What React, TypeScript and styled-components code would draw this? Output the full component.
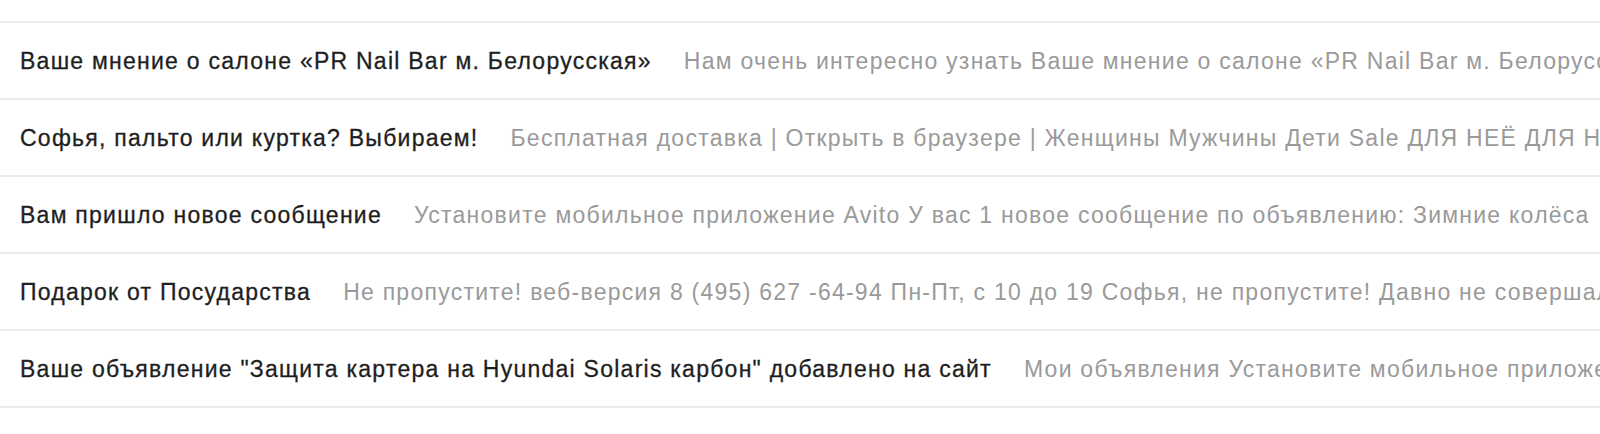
import React from 'react';
import styled, { createGlobalStyle } from 'styled-components';

const GlobalStyle = createGlobalStyle`
  html, body {
    margin: 0;
    padding: 0;
    background: #ffffff;
  }
  body {
    font-family: 'Liberation Sans', Arial, sans-serif;
    overflow: hidden;
  }
`;

interface Letter {
  subject: string;
  snippet: string;
}

const letters: Letter[] = [
  {
    subject: 'Ваше мнение о салоне «PR Nail Bar м. Белорусская»',
    snippet:
      'Нам очень интересно узнать Ваше мнение о салоне «PR Nail Bar м. Белорусская». Пожалуйста, оцените качество обслуживания',
  },
  {
    subject: 'Софья, пальто или куртка? Выбираем!',
    snippet:
      'Бесплатная доставка | Открыть в браузере | Женщины Мужчины Дети Sale ДЛЯ НЕЁ ДЛЯ НЕГО Новинки сезона',
  },
  {
    subject: 'Вам пришло новое сообщение',
    snippet:
      'Установите мобильное приложение Avito У вас 1 новое сообщение по объявлению: Зимние колёса',
  },
  {
    subject: 'Подарок от Посударства',
    snippet:
      'Не пропустите! веб-версия 8 (495) 627 -64-94 Пн-Пт, с 10 до 19 Софья, не пропустите! Давно не совершали покупок',
  },
  {
    subject: 'Ваше объявление "Защита картера на Hyundai Solaris карбон" добавлено на сайт',
    snippet:
      'Мои объявления Установите мобильное приложение Avito Ваше объявление добавлено на сайт',
  },
];

const App: React.FC = () => {
  return (
    <>
      <GlobalStyle />
      <Page>
        <List>
          {letters.map((letter) => (
            <Row key={letter.subject}>
              <Subject>{letter.subject}</Subject>
              <Snippet>{letter.snippet}</Snippet>
            </Row>
          ))}
        </List>
      </Page>
    </>
  );
};

const Page = styled.div`
  width: 1600px;
  height: 434px;
  padding-top: 21px;
  box-sizing: border-box;
  overflow: hidden;
`;

const List = styled.ul`
  list-style: none;
  margin: 0;
  padding: 0;
  border-top: 2px solid #ebebeb;
`;

// 2px top padding nudges the text down a touch; row pitch stays 77px
const Row = styled.li`
  display: flex;
  align-items: center;
  gap: 32px;
  height: 73px;
  padding: 2px 0 0 20px;
  border-bottom: 2px solid #ebebeb;
  white-space: nowrap;
  overflow: hidden;
  font-size: 23px;
  letter-spacing: 1.25px;
`;

const Subject = styled.span`
  color: #1e1e1e;
  -webkit-text-stroke: 0.3px #1e1e1e;
  flex-shrink: 0;
`;

const Snippet = styled.span`
  color: #9a9a9a;
  flex-shrink: 0;
`;

export default App;
